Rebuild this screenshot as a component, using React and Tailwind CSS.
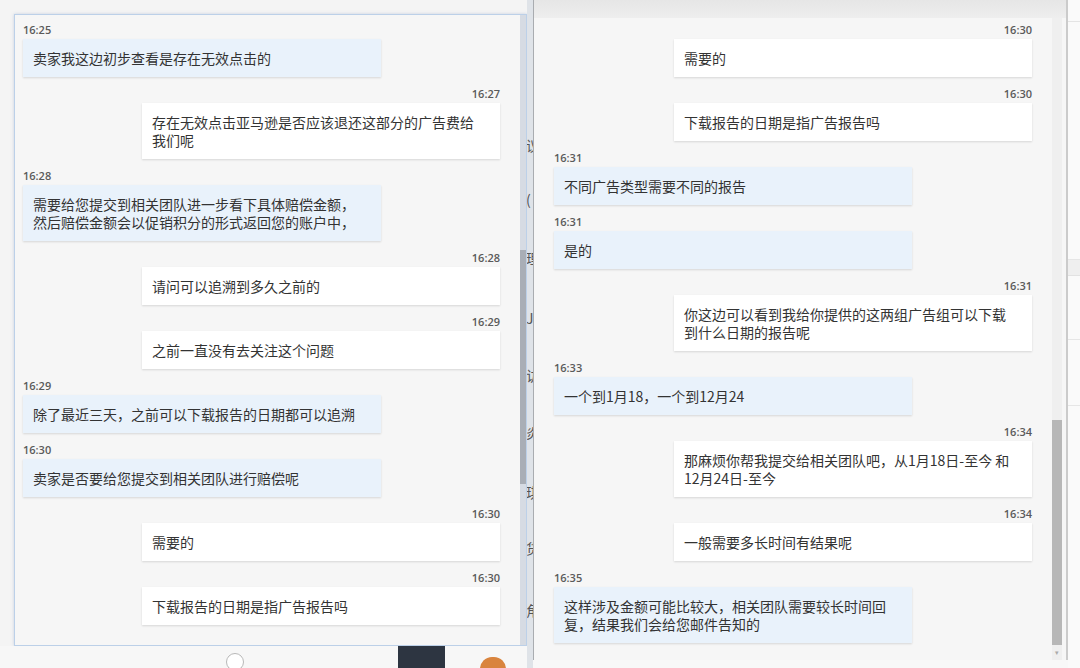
import React from "react";

const leftChat = [
  { side: "in", time: "16:25", lines: ["卖家我这边初步查看是存在无效点击的"] },
  {
    side: "out",
    time: "16:27",
    lines: ["存在无效点击亚马逊是否应该退还这部分的广告费给", "我们呢"],
  },
  {
    side: "in",
    time: "16:28",
    lines: [
      "需要给您提交到相关团队进一步看下具体赔偿金额，",
      "然后赔偿金额会以促销积分的形式返回您的账户中，",
    ],
  },
  { side: "out", time: "16:28", lines: ["请问可以追溯到多久之前的"] },
  { side: "out", time: "16:29", lines: ["之前一直没有去关注这个问题"] },
  { side: "in", time: "16:29", lines: ["除了最近三天，之前可以下载报告的日期都可以追溯"] },
  { side: "in", time: "16:30", lines: ["卖家是否要给您提交到相关团队进行赔偿呢"] },
  { side: "out", time: "16:30", lines: ["需要的"] },
  { side: "out", time: "16:30", lines: ["下载报告的日期是指广告报告吗"] },
];

const rightChat = [
  { side: "out", time: "16:30", lines: ["需要的"] },
  { side: "out", time: "16:30", lines: ["下载报告的日期是指广告报告吗"] },
  { side: "in", time: "16:31", lines: ["不同广告类型需要不同的报告"] },
  { side: "in", time: "16:31", lines: ["是的"] },
  {
    side: "out",
    time: "16:31",
    lines: ["你这边可以看到我给你提供的这两组广告组可以下载", "到什么日期的报告呢"],
  },
  { side: "in", time: "16:33", lines: ["一个到1月18，一个到12月24"] },
  {
    side: "out",
    time: "16:34",
    lines: ["那麻烦你帮我提交给相关团队吧，从1月18日-至今 和", "12月24日-至今"],
  },
  { side: "out", time: "16:34", lines: ["一般需要多长时间有结果呢"] },
  {
    side: "in",
    time: "16:35",
    lines: ["这样涉及金额可能比较大，相关团队需要较长时间回", "复，结果我们会给您邮件告知的"],
  },
];

const gapChars = [
  { y: 136, c: "议" },
  { y: 190, c: "(" },
  { y: 249, c: "理" },
  { y: 309, c: "J" },
  { y: 366, c: "访" },
  { y: 423, c: "炎" },
  { y: 483, c: "琪" },
  { y: 539, c: "货" },
  { y: 601, c: "角" },
];

const Message = ({ side, time, lines }) => {
  const incoming = side === "in";
  return (
    <div className={`flex flex-col ${incoming ? "items-start" : "items-end"}`}>
      <div className="h-[14px] leading-[14px] text-[11px] font-semibold text-[#5a5a5a] font-['Open_Sans','Liberation_Sans',sans-serif]">
        {time}
      </div>
      <div
        className={`mt-[2px] w-[358px] px-[10px] py-[10px] text-[14px] leading-[18px] text-[#333] whitespace-nowrap shadow-[0_1px_2px_rgba(0,0,0,0.13)] ${
          incoming ? "bg-[#e9f2fb]" : "bg-white"
        }`}
      >
        {lines.map((l, i) => (
          <div key={i}>{l}</div>
        ))}
      </div>
    </div>
  );
};

const ChatList = ({ items }) => (
  <div className="flex flex-col gap-[10px]">
    {items.map((m, i) => (
      <Message key={i} {...m} />
    ))}
  </div>
);

export default function App() {
  return (
    <div className="w-[1080px] h-[668px] overflow-hidden flex bg-[#f4f4f4] font-['Noto_Sans_CJK_SC','Liberation_Sans',sans-serif]">
      {/* left window column */}
      <div className="w-[527px] flex flex-col">
        <div className="h-[14px] shrink-0" />
        <div className="flex">
          <div className="w-[14px] shrink-0" />
          <div className="w-[513px] h-[632px] border border-[#bcd0e8] bg-[#f6f6f6] flex overflow-hidden shadow-[0_0_3px_rgba(120,150,190,0.35)]">
            <div className="flex-1 pt-[8px] pl-[8px] pr-[20px] overflow-hidden">
              <ChatList items={leftChat} />
            </div>
            <div className="w-[6px] h-full bg-[#d6dbe3] flex flex-col">
              <div className="h-[235px]" />
              <div className="h-[234px] bg-[#a9aeb6]" />
            </div>
          </div>
        </div>
        <div className="flex-1 bg-[#f7f7f7] flex items-start">
          <div className="ml-[226px] mt-[7px] w-[18px] h-[18px] rounded-full border border-[#b8b8b8] bg-white" />
          <div className="ml-[154px] w-[47px] h-[22px] bg-[#2d3541]" />
          <div className="ml-[35px] mt-[11px] w-[26px] h-[12px] rounded-t-full bg-[#d9843e]" />
        </div>
      </div>

      {/* gap between windows */}
      <div className="w-[6px] h-full bg-[#dfe3e8] overflow-hidden flex flex-col text-[14px] leading-[18px] text-[#555]">
        {gapChars.map((g, i) => (
          <div
            key={i}
            className="h-[18px] -ml-[1px]"
            style={{ marginTop: i === 0 ? g.y : g.y - gapChars[i - 1].y - 18 }}
          >
            {g.c}
          </div>
        ))}
      </div>

      {/* right window */}
      <div className="w-[535px] flex flex-col">
        <div className="h-[660px] border-l border-[#a9acb0] border-r-2 border-r-[#cbcbcb] bg-[#f6f6f6] flex flex-col overflow-hidden">
          <div className="h-[18px] shrink-0 bg-gradient-to-b from-[#e6e6e6] to-[#eeeeee]" />
          <div className="flex-1 flex overflow-hidden">
            <div className="flex-1 pt-[5px] pl-[20px] pr-[20px] overflow-hidden">
              <ChatList items={rightChat} />
            </div>
            <div className="w-[10px] bg-[#efefef] flex flex-col">
              <div className="h-[402px]" />
              <div className="h-[225px] bg-[#b7b7b7]" />
              <div className="mt-[4px] text-[7px] leading-[7px] text-[#aaa] text-center">▾</div>
            </div>
            <div className="w-[4px]" />
          </div>
        </div>
        <div className="flex-1 bg-[#f8f8f8]" />
      </div>

      {/* page edge at the right */}
      <div className="w-[12px] h-full bg-[#fafafa] flex flex-col">
        <div className="h-[22px] border-b border-[#e4e4e4]" />
        <div className="h-[238px] border-b border-[#e6e6e6]" />
        <div className="h-[16px] bg-[#efefef] border-b border-[#e2e2e2]" />
        <div className="h-[64px] border-b border-[#e6e6e6]" />
        <div className="h-[66px] border-b border-[#e6e6e6]" />
        <div className="flex-1" />
      </div>
    </div>
  );
}
